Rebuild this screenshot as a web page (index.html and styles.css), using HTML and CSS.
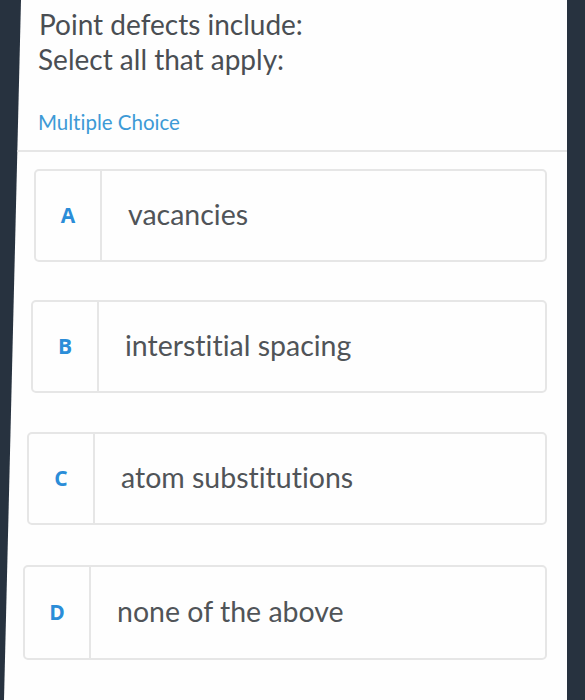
FILE: index.html
```html
<!DOCTYPE html>
<html>
<head>
<meta charset="utf-8">
<link rel="stylesheet" href="styles.css">
</head>
<body>
<div class="screen">
  <div class="panel">
    <div class="question">
      <p class="q-line q1">Point defects include:</p>
      <p class="q-line q2">Select all that apply:</p>
      <p class="qtype">Multiple Choice</p>
    </div>
    <div class="options">
      <div class="option opt-a"><div class="letter">A</div><div class="answer">vacancies</div></div>
      <div class="option opt-b"><div class="letter">B</div><div class="answer">interstitial spacing</div></div>
      <div class="option opt-c"><div class="letter">C</div><div class="answer">atom substitutions</div></div>
      <div class="option opt-d"><div class="letter">D</div><div class="answer">none of the above</div></div>
    </div>
  </div>
</div>
</body>
</html>
```

FILE: styles.css
```css
html, body {
  margin: 0;
  padding: 0;
  background: #27323f;
  height: 700px;
  overflow: hidden;
}
.screen {
  display: flex;
  height: 700px;
}
.panel {
  margin-left: 4px;
  width: 563px;
  height: 700px;
  background: #fefefe;
  clip-path: polygon(17px 0, 100% 0, 100% 100%, 0 100%);
  font-family: Lato, "Open Sans", sans-serif;
  font-variant-ligatures: none;
  display: flex;
  flex-direction: column;
}
.question {
  padding: 7px 0 0 35px;
  border-bottom: 2px solid #e6e6e6;
  height: 152px;
  box-sizing: border-box;
}
.q-line {
  margin: 0;
  font-size: 28px;
  line-height: 35px;
  color: #4a4e53;
}
.q2 { margin-left: -1px; }
.qtype {
  margin: 33px 0 0 -1px;
  font-size: 20.5px;
  line-height: 24px;
  color: #3d9ad6;
}
.options {
  display: flex;
  flex-direction: column;
  gap: 38px;
  padding-top: 17px;
}
.option {
  display: flex;
  height: 93px;
  box-sizing: border-box;
  border: 2px solid #e6e6e6;
  border-radius: 5px;
  margin-right: 20px;
  align-items: stretch;
}
.opt-a { margin-left: 30px; }
.opt-b { margin-left: 27px; }
.opt-c { margin-left: 23px; margin-top: 1px; }
.opt-d { margin-left: 19px; margin-top: 2px; height: 95px; }
.letter {
  width: 64px;
  border-right: 2px solid #e6e6e6;
  display: flex;
  align-items: center;
  justify-content: center;
  padding-bottom: 2px;
  font-family: "Open Sans", Lato, sans-serif;
  font-size: 21px;
  font-weight: 700;
  color: #2b8dd8;
}
.answer {
  display: flex;
  align-items: center;
  padding-left: 26px;
  padding-bottom: 4px;
  font-size: 28.5px;
  color: #505458;
}
```
